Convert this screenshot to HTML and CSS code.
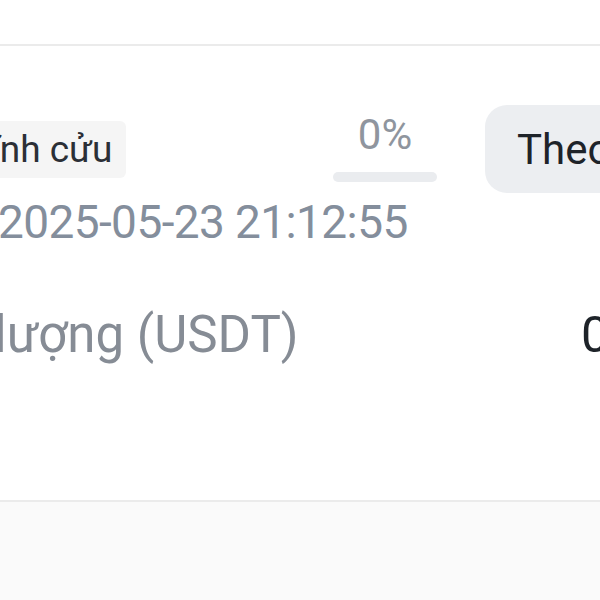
FILE: index.html
```html
<!DOCTYPE html>
<html lang="vi">
<head>
<meta charset="utf-8">
<title>Lệnh</title>
<link rel="stylesheet" href="styles.css">
</head>
<body>
<div class="screen">
  <div class="divider"></div>
  <section class="order">
    <div class="head">
      <span class="tag">Vĩnh cửu</span>
      <div class="progress">
        <span class="pct">0%</span>
        <div class="bar"></div>
      </div>
      <button class="follow">Theo dõi</button>
    </div>
    <div class="time">2025-05-23 21:12:55</div>
    <div class="stat">
      <span class="label">Khối lượng (USDT)</span>
      <span class="value">0</span>
    </div>
  </section>
  <div class="divider"></div>
  <div class="rest"></div>
</div>
</body>
</html>
```
FILE: styles.css
```css
html, body {
  margin: 0;
  padding: 0;
  background: #ffffff;
  overflow: hidden;
}
body {
  font-family: Roboto, "Noto Sans", sans-serif;
  width: 600px;
  height: 600px;
}
.screen {
  padding-top: 44px;
}
.divider {
  height: 2px;
  background: #ebebeb;
}
.order {
  width: 600px;
  height: 454px;
  padding-top: 59px;
  box-sizing: border-box;
}
.head {
  display: grid;
  grid-template-columns: 380px 104px auto;
  align-items: center;
  margin-left: -47px;
  width: 740px;
}
.tag {
  justify-self: start;
  background: #f5f5f5;
  color: #2b2f36;
  font-size: 37px;
  line-height: 57px;
  padding: 0 14px;
  border-radius: 6px;
  white-space: nowrap;
}
.progress {
  display: flex;
  flex-direction: column;
  align-items: center;
  gap: 16px;
  margin-top: -2px;
}
.pct {
  color: #8f959e;
  font-size: 42px;
  line-height: 42px;
}
.bar {
  width: 104px;
  height: 10px;
  border-radius: 5px;
  background: #eaecef;
}
.follow {
  margin-left: 48px;
  justify-self: start;
  height: 88px;
  padding: 0 32px;
  border: none;
  border-radius: 22px;
  background: #eceef1;
  color: #1e2329;
  font-family: Roboto, "Noto Sans", sans-serif;
  font-size: 42px;
  white-space: nowrap;
}
.time {
  margin-top: 6px;
  margin-left: -2px;
  color: #848e9c;
  font-size: 46px;
  line-height: 46px;
  letter-spacing: -0.6px;
  white-space: nowrap;
}
.stat {
  display: flex;
  align-items: baseline;
  justify-content: space-between;
  margin-top: 65px;
  margin-left: -120px;
  width: 729px;
  line-height: 50px;
}
.label {
  color: #868c95;
  font-size: 51px;
  white-space: nowrap;
}
.value {
  color: #1e2329;
  font-size: 50px;
}
.rest {
  height: 100px;
  background: #fafafa;
}
```
